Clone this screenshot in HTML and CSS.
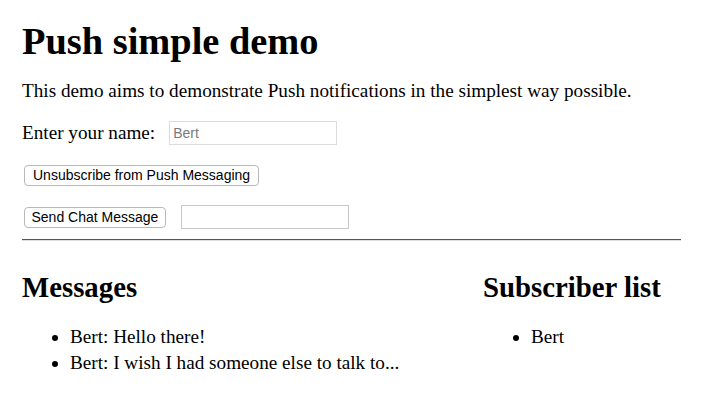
FILE: index.html
```html
<!DOCTYPE html>
<html lang="en">
<head>
<meta charset="utf-8">
<title>Push simple demo</title>
<link rel="stylesheet" href="styles.css">
</head>
<body>
  <h1 class="title">Push simple demo</h1>
  <p class="intro">This demo aims to demonstrate Push notifications in the simplest way possible.</p>
  <div class="row name-row">
    <label class="label" for="name">Enter your name:</label>
    <input class="field name-field" id="name" type="text" placeholder="Bert">
  </div>
  <div class="row">
    <button class="btn" type="button">Unsubscribe from Push Messaging</button>
  </div>
  <div class="row chat-row">
    <button class="btn btn-send" type="button">Send Chat Message</button>
    <input class="field chat-field" type="text">
  </div>
  <hr class="rule">
  <div class="columns">
    <section class="col">
      <h2 class="heading">Messages</h2>
      <ul class="list">
        <li>Bert: Hello there!</li>
        <li>Bert: I wish I had someone else to talk to...</li>
      </ul>
    </section>
    <section class="col">
      <h2 class="heading">Subscriber list</h2>
      <ul class="list">
        <li>Bert</li>
      </ul>
    </section>
  </div>
</body>
</html>
```

FILE: styles.css
```css
html, body {
  background: #fff;
}
body {
  margin: 0 24px 0 22px;
  font-family: "Liberation Serif", "Times New Roman", serif;
  font-size: 19.2px;
  color: #000;
}
.title {
  font-size: 38.4px;
  font-weight: bold;
  margin: 20px 0 0;
  line-height: 42.5px;
}
.intro {
  margin: 17.5px 0 0;
  line-height: 21.3px;
}
.row {
  display: flex;
  align-items: center;
  margin-top: 20px;
}
.name-row {
  margin-top: 20px;
}
.label {
  margin-right: 14px;
}
.field {
  box-sizing: border-box;
  height: 24px;
  width: 168px;
  border: 1px solid #dcdcdc;
  padding: 0 3px;
  font-family: "Liberation Sans", Arial, sans-serif;
  font-size: 14px;
  color: #000;
  background: #fff;
  outline: none;
}
.field::placeholder {
  color: #7a7a7a;
}
.chat-field {
  border-color: #c8c8c8;
  margin-left: 15px;
}
.btn {
  box-sizing: border-box;
  height: 21px;
  margin-left: 2px;
  padding: 0 8px;
  border: 1px solid #b9b9b9;
  border-radius: 4px;
  background: #fff;
  font-family: "Liberation Sans", Arial, sans-serif;
  font-size: 14px;
  line-height: 19px;
  color: #000;
}
.btn-send {
  padding: 0 6.5px;
}
.chat-row {
  margin-top: 19px;
}
.rule {
  margin: 10px 0 0;
  height: 0;
  border: 0;
  border-top: 1px solid #555;
  border-bottom: 1px solid #dedede;
}
.columns {
  display: grid;
  grid-template-columns: 461px 1fr;
}
.heading {
  font-size: 28.8px;
  font-weight: bold;
  line-height: 32px;
  margin: 30px 0 0;
}
.list {
  margin: 21px 0 0;
  padding-left: 48px;
}
.list li {
  line-height: 25.3px;
}
```
